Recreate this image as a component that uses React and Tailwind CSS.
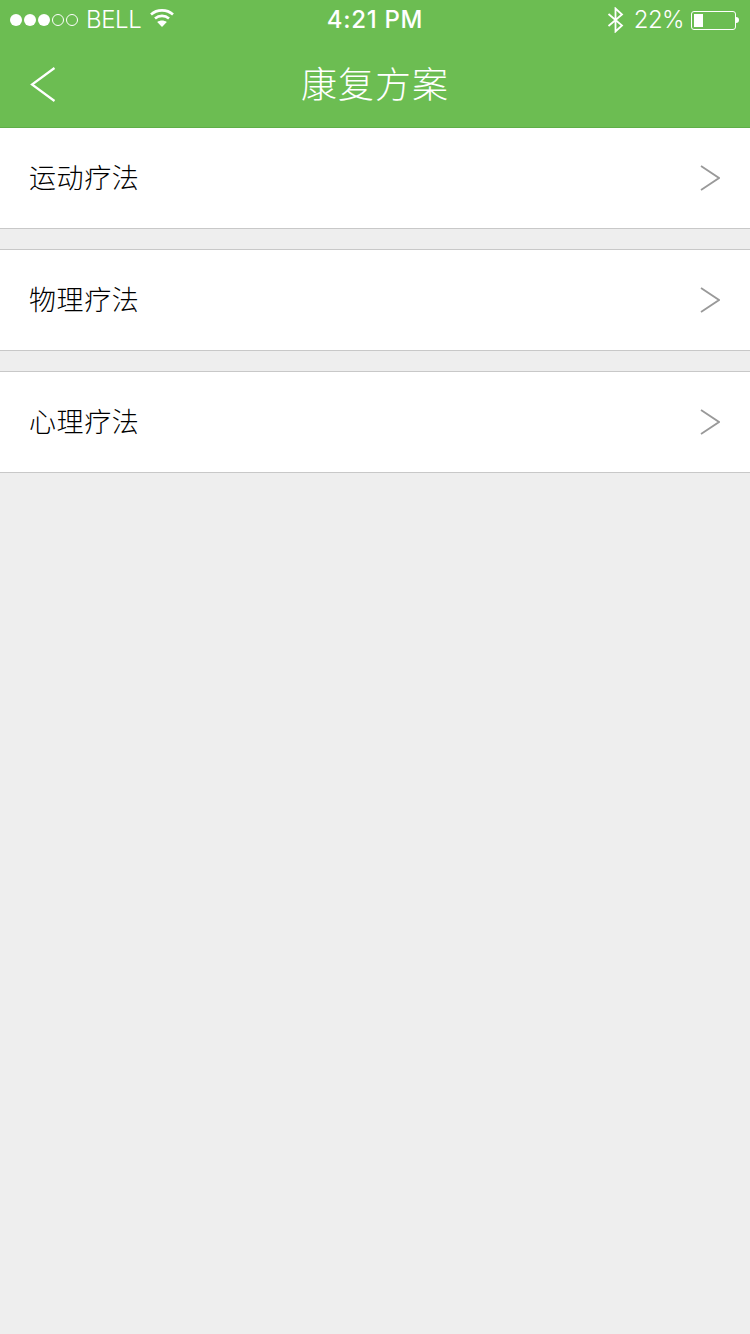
const items = ['运动疗法', '物理疗法', '心理疗法'];

function Dots() {
  return (
    <div className="flex items-center gap-[2px]">
      {[0, 1, 2].map((i) => (
        <span key={i} className="w-3 h-3 rounded-full bg-white" />
      ))}
      {[3, 4].map((i) => (
        <span key={i} className="w-3 h-3 rounded-full border border-white" />
      ))}
    </div>
  );
}

function Wifi() {
  return (
    <svg width="24" height="20" viewBox="0 0 24 20" fill="none" stroke="#fff" strokeWidth="2.6">
      <path d="M1 6.5C7 1 17 1 23 6.5" />
      <path d="M5 10.5C9 7 15 7 19 10.5" />
      <path d="M12 19L7.2 14C10 12 14 12 16.8 14Z" fill="#fff" stroke="none" />
    </svg>
  );
}

function Bluetooth() {
  return (
    <svg width="17" height="26" viewBox="0 0 17 26" fill="none" stroke="#fff" strokeWidth="1.8">
      <path d="M1.5 7L15 18.5L8.5 24.5V1.5L15 7.5L1.5 19" />
    </svg>
  );
}

function Chevron() {
  return (
    <svg width="20" height="26" viewBox="0 0 20 26" fill="none" stroke="#999" strokeWidth="1.8">
      <path d="M1 1L19 13L1 25" />
    </svg>
  );
}

export default function App() {
  return (
    <div className="min-h-[1334px] bg-[#eeeeee] font-['Liberation_Sans','Noto_Sans_CJK_SC',sans-serif]">
      <header className="bg-[#6cbd52] h-[128px] border-b border-[#5fae48] text-white">
        <div className="h-10 relative flex items-center justify-between pl-[10px] pr-[11px]">
          <div className="flex items-center">
            <Dots />
            <span className="ml-[8px] font-['Inter'] text-[24px] font-light leading-none tracking-[-0.4px]">BELL</span>
            <span className="ml-[9px] -mt-1"><Wifi /></span>
          </div>
          <span className="absolute left-0 right-0 text-center font-['Inter'] text-[24px] font-medium leading-none tracking-[0.7px]">4:21 PM</span>
          <div className="flex items-center">
            <Bluetooth />
            <span className="ml-[10px] font-['Inter'] text-[24px] font-light leading-none tracking-[-0.6px]">22%</span>
            <div className="ml-[7px] flex items-center">
              <div className="w-[45px] h-[19px] rounded-[3px] border border-white p-[2px]">
                <div className="w-[9px] h-full bg-white" />
              </div>
              <div className="w-[3px] h-[6px] bg-white rounded-r-sm" />
            </div>
          </div>
        </div>
        <div className="h-[87px] relative flex items-center justify-center">
          <svg className="absolute left-[30px] top-[27px]" width="26" height="35" viewBox="0 0 26 35" fill="none" stroke="#fff" strokeWidth="2.2">
            <path d="M24.5 1L2 17.5L24.5 34" />
          </svg>
          <h1 className="text-[36px] tracking-[1px] leading-none font-light mt-[4px]">康复方案</h1>
        </div>
      </header>
      <div className="flex flex-col gap-5">
        {items.map((item) => (
          <div key={item} className="h-[101px] bg-white border-b border-[#c8c8c8] [&:not(:first-child)]:h-[102px] [&:not(:first-child)]:border-t flex items-center justify-between pl-[29px] pr-[30px]">
            <span className="text-[27px] tracking-[0.6px] leading-none font-light text-black mt-[2px]">{item}</span>
            <Chevron />
          </div>
        ))}
      </div>
    </div>
  );
}
